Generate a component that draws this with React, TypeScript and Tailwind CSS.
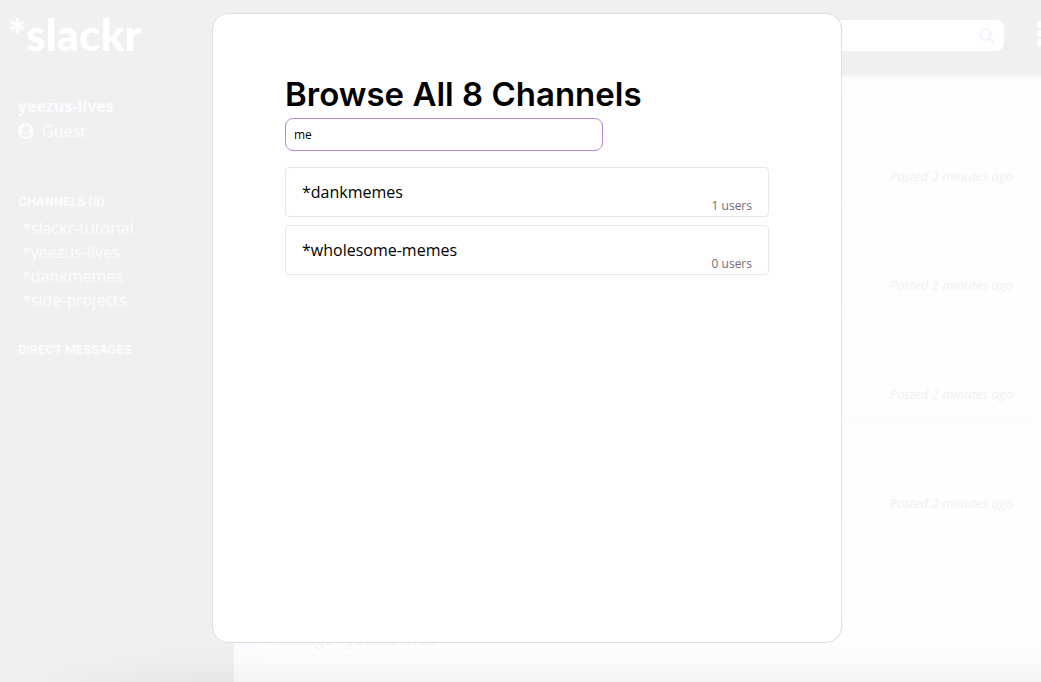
import { useState } from "react";

const joined = ["slackr-tutorial", "yeezus-lives", "dankmemes", "side-projects"];
const channels = [
  { name: "slackr-tutorial", users: 3 },
  { name: "yeezus-lives", users: 2 },
  { name: "dankmemes", users: 1 },
  { name: "side-projects", users: 1 },
  { name: "wholesome-memes", users: 0 },
  { name: "books", users: 0 },
  { name: "sports", users: 0 },
  { name: "travel", users: 0 },
];
const posts = [1, 2, 3, 4];

function UserIcon() {
  return (
    <svg viewBox="0 0 16 16" className="h-4 w-4" fill="currentColor" aria-hidden="true">
      <path
        fillRule="evenodd"
        d="M8 0a8 8 0 1 1 0 16A8 8 0 0 1 8 0ZM8 2.400A3.300 3.500 0 1 0 8 9.400A3.300 3.500 0 1 0 8 2.400ZM2.900 11.600C4.200 13.300 6 14 8 14S11.800 13.300 13.100 11.600C12.600 10.500 11.600 10 10.600 9.800A4.500 4.500 0 0 1 5.400 9.800C4.400 10 3.400 10.500 2.900 11.600Z"
      />
    </svg>
  );
}

function SearchIcon() {
  return (
    <svg viewBox="0 0 16 16" className="h-4 w-4" fill="none" stroke="currentColor" strokeWidth="2" aria-hidden="true">
      <circle cx="6.500" cy="6.500" r="5.200" />
      <path d="M10.500 10.500l3.500 3.500" strokeLinecap="round" strokeWidth="2.400" />
    </svg>
  );
}

function ListIcon() {
  return (
    <svg viewBox="0 0 28 26" className="h-[26px] w-7" fill="currentColor" aria-hidden="true">
      {[0, 9, 18].map((y) => (
        <g key={y}>
          <rect x="0" y={y} width="7" height="7" rx="2" />
          <rect x="9" y={y} width="19" height="7" rx="2" />
        </g>
      ))}
    </svg>
  );
}

export default function App() {
  const [query, setQuery] = useState("me");
  const matches = channels.filter((c) => c.name.includes(query));

  return (
    <div className="relative flex h-screen min-h-[682px] flex-col overflow-hidden bg-[#fefcff] font-['Open_Sans',sans-serif] text-base text-[#fdfcff]">
      <header className="flex h-[75px] shrink-0 items-start overflow-hidden bg-[#f0f0f0]">
        <h1 className="ml-2 mt-2 grow font-[Lato,sans-serif] text-[44px] font-black leading-[52px] text-white">*slackr</h1>
        <label className="mt-5 flex h-[31px] w-[400px] items-center rounded-lg bg-white pr-[9px] text-[#f5f2fb]">
          <input aria-label="Search" className="min-w-0 grow bg-transparent px-2 outline-none" />
          <SearchIcon />
        </label>
        <button aria-label="Menu" className="-mr-6 ml-[33px] mt-[21px] w-7 shrink-0 text-white">
          <ListIcon />
        </button>
      </header>

      <div className="flex min-h-0 grow">
        <aside className="w-[234px] shrink-0 border-t border-[#eeeeee] bg-[#f0f0f0] pl-[18px]">
          <div className="border-b border-[#f2f2f2] pb-[19px] pt-[18px]">
            <h2 className="font-bold leading-6">yeezus-lives</h2>
            <p className="flex items-center gap-2 leading-[26px]">
              <UserIcon />
              Guest
            </p>
          </div>
          <h3 className="mt-7 font-[Inter,sans-serif] text-xs font-bold leading-5">CHANNELS (8)</h3>
          <ul className="mt-1 pl-1">
            {joined.map((name) => (
              <li key={name} className="leading-6">
                <a href={"#" + name}>*{name}</a>
              </li>
            ))}
          </ul>
          <h3 className="mt-7 font-[Inter,sans-serif] text-xs font-bold leading-5">DIRECT MESSAGES</h3>
        </aside>

        <main className="flex min-w-0 grow flex-col shadow-[inset_0_4px_4px_-3px_#f3f3f3]">
          <div className="flex flex-col gap-[9px] pl-[26px] pr-[13px] pt-6">
            {posts.map((id) => (
              <article key={id} className="flex h-[100px] items-end justify-end border-b border-[#fbfbfb] bg-[#fefefe] pb-3 pr-[15px]">
                <time className="text-[13px] italic leading-5 text-[#f0f0f0]">Posted 2 minutes ago</time>
              </article>
            ))}
          </div>
          <div className="mb-[19px] ml-[26px] mr-0.5 mt-auto">
            <input
              aria-label="Message"
              placeholder="Message *yeezus-lives"
              className="h-12 w-full rounded-lg bg-[#fefefe] px-2 outline-none placeholder:text-[#f3f3f4]"
            />
          </div>
        </main>
      </div>

      <div className="pointer-events-none absolute inset-x-0 bottom-0 h-10 bg-linear-to-b from-transparent via-black/1 to-black/4 mask-l-from-80% mask-l-to-98%" />

      <div className="absolute inset-0 flex items-start justify-center pl-[13px] pt-[13px]">
        <section
          role="dialog"
          aria-labelledby="browse-title"
          className="h-[630px] w-[630px] rounded-2xl border border-[#dfdce5] bg-white px-[72px] pt-[60px] text-black"
        >
          <h2 id="browse-title" className="whitespace-nowrap pb-1 font-[Inter,sans-serif] text-[33px] font-semibold leading-10">
            Browse All 8 Channels
          </h2>
          <input
            aria-label="Filter channels"
            value={query}
            onChange={(e) => setQuery(e.target.value)}
            className="block h-[33px] w-[318px] rounded-lg border border-[#b48ad6] px-2 text-xs outline-none"
          />
          <ul className="mt-4 flex flex-col gap-2">
            {matches.map((c) => (
              <li key={c.name} className="flex h-[50px] justify-between rounded border border-[#e8e8e8] px-4">
                <a href={"#" + c.name} className="mt-3 leading-6">
                  *{c.name}
                </a>
                <span className="self-end text-xs leading-5 text-[#736b78]">{c.users} users</span>
              </li>
            ))}
          </ul>
        </section>
      </div>
    </div>
  );
}
